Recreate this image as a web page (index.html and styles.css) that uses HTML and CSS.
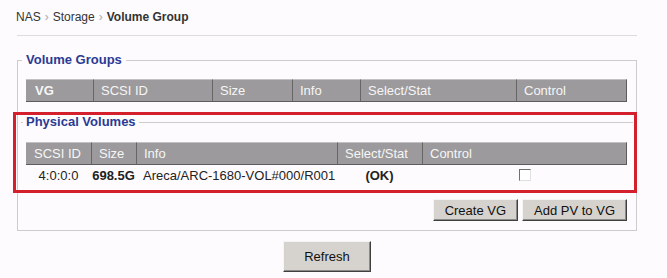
FILE: index.html
```html
<!DOCTYPE html>
<html lang="en">
<head>
    <meta charset="UTF-8">
    <title>Volume Group</title>
    <link rel="stylesheet" href="styles.css">
</head>
<body>
    <div class="page">
        <div class="crumb">NAS<span class="sep">&rsaquo;</span>Storage<span class="sep">&rsaquo;</span><b>Volume Group</b></div>
        <div class="rule"></div>

        <fieldset class="group">
            <legend>Volume Groups</legend>
            <table class="grid vg-table">
                <colgroup>
                    <col style="width: 67px"><col style="width: 119px"><col style="width: 80px">
                    <col style="width: 68px"><col style="width: 156px"><col style="width: 111px">
                </colgroup>
                <tr>
                    <th class="strong">VG</th>
                    <th>SCSI ID</th>
                    <th>Size</th>
                    <th>Info</th>
                    <th>Select/Stat</th>
                    <th>Control</th>
                </tr>
            </table>

            <div class="pv-wrap">
                <fieldset class="sub-group">
                    <legend>Physical Volumes</legend>
                    <table class="grid pv-table">
                        <colgroup>
                            <col style="width: 65px"><col style="width: 45px"><col style="width: 201px">
                            <col style="width: 85px"><col style="width: 205px">
                        </colgroup>
                        <tr>
                            <th>SCSI ID</th>
                            <th>Size</th>
                            <th>Info</th>
                            <th>Select/Stat</th>
                            <th>Control</th>
                        </tr>
                        <tr>
                            <td>4:0:0:0</td>
                            <td class="strong">698.5G</td>
                            <td class="info">Areca/ARC-1680-VOL#000/R001</td>
                            <td class="strong">(OK)</td>
                            <td><span class="check"></span></td>
                        </tr>
                    </table>
                </fieldset>
                <div class="highlight"></div>
            </div>

            <div class="actions">
                <button class="btn">Create VG</button>
                <button class="btn">Add PV to VG</button>
            </div>
        </fieldset>

        <div class="footer">
            <button class="btn btn-big">Refresh</button>
        </div>
    </div>
</body>
</html>
```

FILE: styles.css
```css
body {
    margin: 0;
    background: #fdfbfd;
    font-family: "Liberation Sans", Arial, sans-serif;
    font-size: 13px;
    color: #222;
}

.page {
    width: 620px;
    margin-left: 17px;
    padding-top: 10px;
}

.crumb {
    font-size: 12px;
    line-height: 15px;
    margin-left: -1px;
    color: #333;
}

.crumb .sep {
    color: #aaa;
    margin: 0 4px;
}

.rule {
    border-top: 1px solid #dcdcdc;
    margin-top: 10px;
}

.group {
    margin: 16px 0 0;
    border: 1px solid #cccccc;
    padding: 0 9px 9px 4px;
    min-width: 0;
}

legend {
    padding: 0 4px;
    font-weight: bold;
    font-size: 13px;
    line-height: 16px;
    color: #2b3a94;
}

.grid {
    border-collapse: separate;
    border-spacing: 0;
    table-layout: fixed;
    width: 601px;
    margin-left: 4px;
}

.vg-table {
    margin-top: 11px;
}

.grid th {
    background: #9c9a9c;
    color: #f6f6f6;
    font-weight: normal;
    text-align: left;
    line-height: 21px;
    padding: 0 0 0 7px;
    border-top: 1px solid #c2c2c2;
    border-bottom: 1px solid #5c5c5c;
    border-left: 1px solid #666;
}

.grid th:first-child {
    border-left: none;
    padding-left: 8px;
}

.grid th:last-child {
    border-right: 1px solid #5c5c5c;
}

.grid th.strong {
    font-weight: bold;
    padding-left: 9px;
}

.grid td {
    line-height: 22px;
    padding: 0;
    text-align: center;
    color: #222;
}

.grid td.strong {
    font-weight: bold;
}

.grid td.info {
    text-align: left;
    padding-left: 7px;
}

.check {
    display: inline-block;
    width: 10px;
    height: 10px;
    background: #fff;
    border: 1px solid;
    border-color: #707070 #e0e0e0 #e0e0e0 #707070;
    vertical-align: -1px;
}

.pv-wrap {
    position: relative;
    margin-top: 12px;
    margin-left: -1px;
}

.sub-group {
    margin: 0 -6px 0 0;
    border: none;
    border-top: 1px solid #cccccc;
    padding: 0 0 0 2px;
    min-width: 0;
}

.sub-group legend {
    padding: 0 3px;
}

.pv-table {
    margin-top: 12px;
    margin-left: 3px;
}

/* red annotation frame drawn over the physical volumes block */
.highlight {
    position: absolute;
    left: -8px;
    top: -2px;
    width: 624px;
    height: 81px;
    box-sizing: border-box;
    border: 3px solid #d3202c;
    pointer-events: none;
}

.actions {
    display: flex;
    justify-content: flex-end;
    gap: 4px;
    margin-top: 12px;
}

.btn {
    font-family: "Liberation Sans", Arial, sans-serif;
    font-size: 13px;
    color: #111;
    background: #d6d3ce;
    border: 1px solid;
    border-color: #f4f4f4 #404040 #404040 #f4f4f4;
    box-shadow: inset -1px -1px 0 #8a8a8a;
    height: 22px;
    padding: 0 11px;
    margin: 0;
}

.footer {
    text-align: center;
    margin-top: 10px;
}

.btn-big {
    height: 31px;
    padding: 0 20px;
}
```
